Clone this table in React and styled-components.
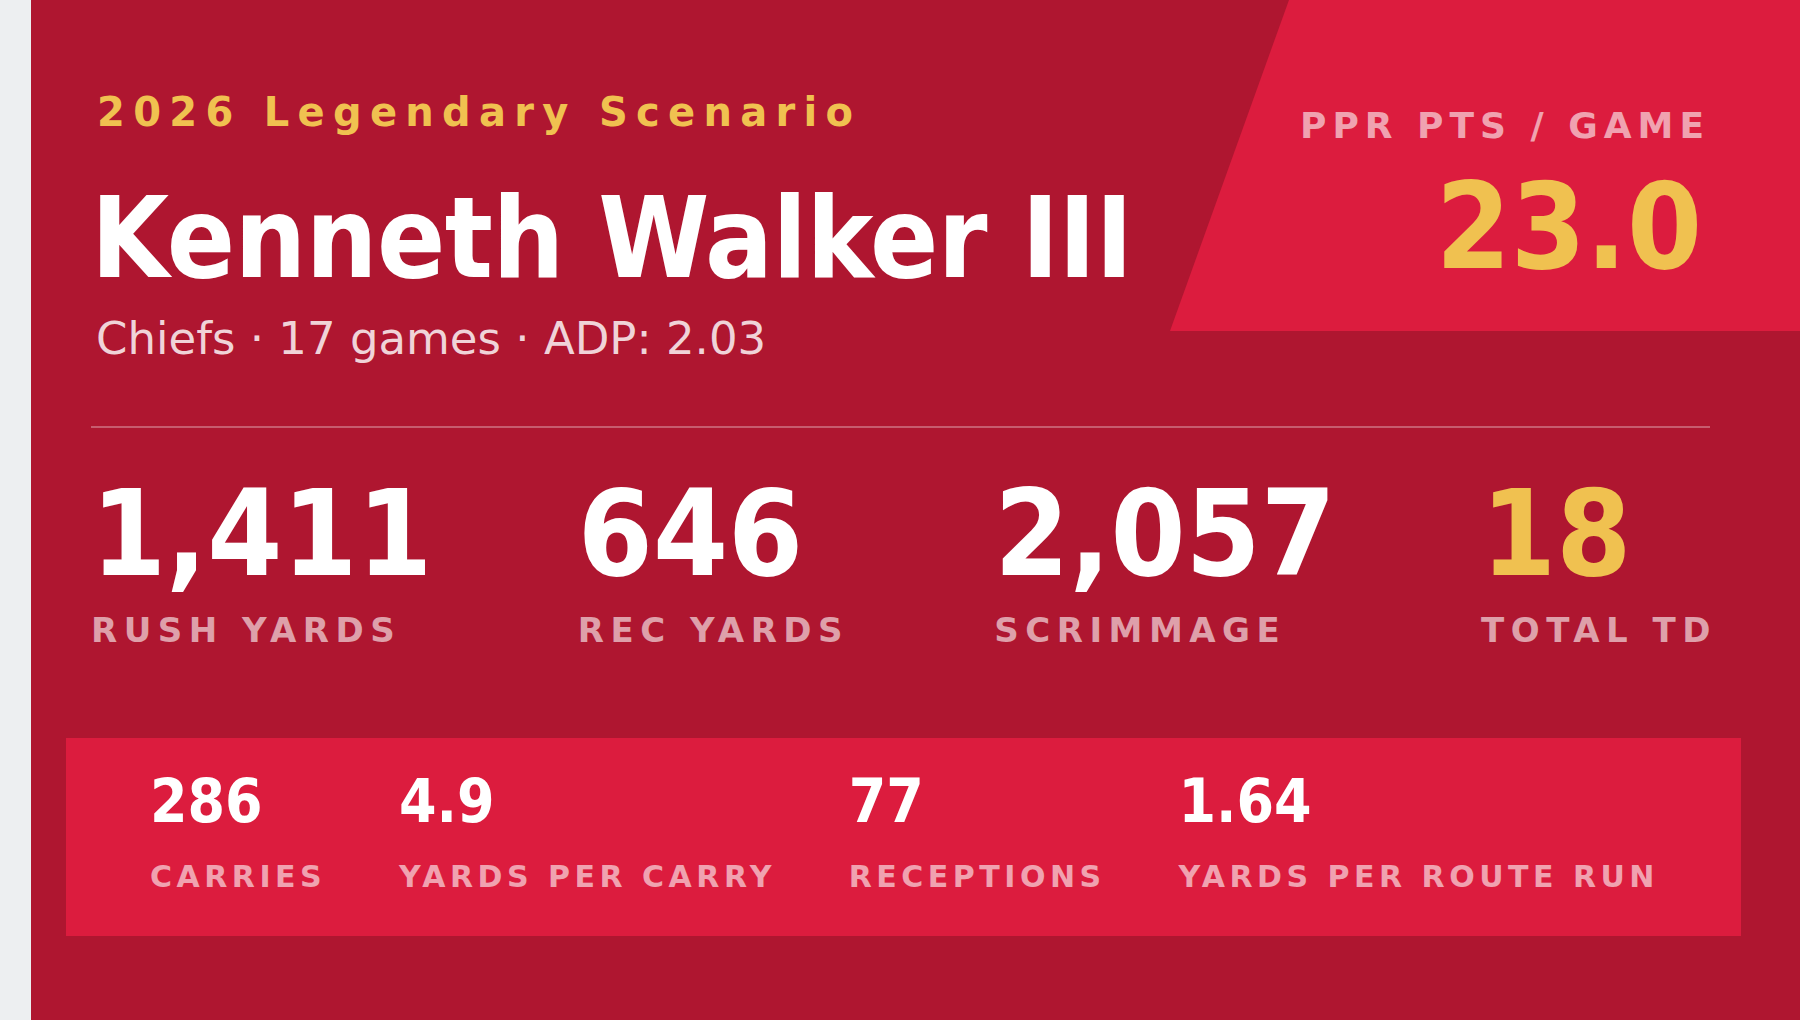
import React from 'react';
import styled, { createGlobalStyle } from 'styled-components';

const GlobalStyle = createGlobalStyle`
  html, body {
    margin: 0;
    padding: 0;
    background: #edeff1;
    overflow: hidden;
  }
  * {
    box-sizing: border-box;
  }
`

const Card = styled.div`
  margin-left: 31px;
  width: 1769px;
  height: 1020px;
  background: #af1630;
  padding: 0 90px 0 60px;
  display: flex;
  flex-direction: column;
  font-family: "DejaVu Sans", sans-serif;
  overflow: hidden;
`

const HeaderRow = styled.div`
  display: flex;
  align-items: flex-start;
  justify-content: space-between;
`

const Identity = styled.div`
  padding-top: 92px;
  display: flex;
  flex-direction: column;
`

const Eyebrow = styled.div`
  margin-left: 6px;
  font-size: 40px;
  line-height: 1;
  font-weight: 700;
  letter-spacing: 8.3px;
  color: #f0c150;
`

const Name = styled.h1`
  margin: 50px 0 0;
  font-family: "DejaVu Sans Condensed", "DejaVu Sans", sans-serif;
  font-stretch: condensed;
  font-size: 112px;
  line-height: 1;
  font-weight: 700;
  letter-spacing: -0.5px;
  color: #fff;
  white-space: nowrap;
`

const Meta = styled.div`
  margin: 22px 0 0 5px;
  font-size: 45px;
  line-height: 1;
  color: rgba(255, 255, 255, 0.82);
`

const PprPanel = styled.div`
  flex-shrink: 0;
  width: 630px;
  height: 331px;
  margin-right: -90px;
  padding: 108px 90px 0 0;
  background: #dc1c3e;
  clip-path: polygon(119px 0, 100% 0, 100% 100%, 0 100%);
  display: flex;
  flex-direction: column;
  align-items: flex-end;
`

const Label = styled.div`
  font-size: ${p => p.$size || 34}px;
  line-height: 1;
  font-weight: 700;
  letter-spacing: ${p => p.$spacing || 6.5}px;
  text-transform: uppercase;
  color: rgba(255, 255, 255, 0.6);
  white-space: nowrap;
`

const Figure = styled.div`
  font-family: "DejaVu Sans Condensed", "DejaVu Sans", sans-serif;
  font-stretch: condensed;
  font-size: ${p => p.$size || 120}px;
  line-height: 1;
  font-weight: 700;
  color: ${p => (p.$gold ? '#f0c150' : '#fff')};
  white-space: nowrap;
`

const PprValue = styled(Figure)`
  margin: 23px 8px 0 0;
`

const Divider = styled.hr`
  margin: 65px 0 0;
  border: none;
  height: 2px;
  background: rgba(255, 255, 255, 0.3);
`

const StatsRow = styled.div`
  margin: 46px -7px 0 0;
  display: flex;
  justify-content: space-between;
`

const Stat = styled.div`
  display: flex;
  flex-direction: column;
  gap: ${p => p.$gap || 19}px;
`

const DetailBox = styled.div`
  margin: 91px -31px 0 -25px;
  padding: 33px 82px 44px 84px;
  background: #dc1c3e;
  display: flex;
  justify-content: space-between;
`

const mainStats = [
  { value: '1,411', label: 'Rush Yards' },
  { value: '646', label: 'Rec Yards' },
  { value: '2,057', label: 'Scrimmage' },
  { value: '18', label: 'Total TD', gold: true },
];

const details = [
  { value: '286', label: 'Carries' },
  { value: '4.9', label: 'Yards per carry' },
  { value: '77', label: 'Receptions' },
  { value: '1.64', label: 'Yards per route run' },
];

export default function App() {
  return (
    <>
      <GlobalStyle />
      <Card>
        <HeaderRow>
          <Identity>
            <Eyebrow>2026 Legendary Scenario</Eyebrow>
            <Name>Kenneth Walker III</Name>
            <Meta>Chiefs · 17 games · ADP: 2.03</Meta>
          </Identity>
          <PprPanel>
            <Label $size={36} $spacing={6}>PPR PTS / GAME</Label>
            <PprValue $gold>23.0</PprValue>
          </PprPanel>
        </HeaderRow>

        <Divider />

        <StatsRow>
          {mainStats.map(s => (
            <Stat key={s.label}>
              <Figure $gold={s.gold}>{s.value}</Figure>
              <Label>{s.label}</Label>
            </Stat>
          ))}
        </StatsRow>

        <DetailBox>
          {details.map(d => (
            <Stat key={d.label} $gap={31}>
              <Figure $size={60}>{d.value}</Figure>
              <Label $size={30} $spacing={4.5}>{d.label}</Label>
            </Stat>
          ))}
        </DetailBox>
      </Card>
    </>
  );
}
